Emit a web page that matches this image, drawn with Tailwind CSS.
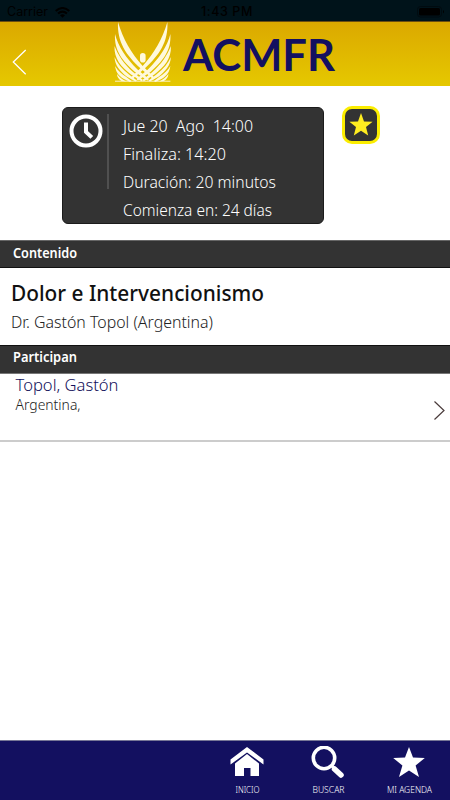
<!DOCTYPE html>
<html lang="es">
<head>
<meta charset="utf-8">
<meta name="viewport" content="width=device-width">
<title>ACMFR</title>
<script src="https://cdn.jsdelivr.net/npm/@tailwindcss/browser@4"></script>
</head>
<body class="flex h-[800px] w-[450px] flex-col overflow-hidden bg-white font-['Noto_Sans',sans-serif] text-[#111]">
<div class="grid h-[21px] shrink-0 grid-cols-3 items-center bg-[#00131a] pt-[3px] font-['Inter',sans-serif] text-[12.5px] leading-none text-black">
  <div class="flex items-center gap-[7px] pl-[7px]"><span>Carrier</span>
    <svg class="h-[11px] w-[15px]" viewBox="0 0 15 11" fill="none" stroke="#000" stroke-width="2"><path d="M.7 4Q7.5-2 14.3 4M3 6.6Q7.5 2.6 12 6.6"/><path d="M5 8.3Q7.5 6.4 10 8.3L7.5 10.8Z" fill="#000" stroke="none"/></svg>
  </div>
  <span class="pl-[4px] text-center font-medium tracking-[.6px]">1:43 PM</span>
  <div class="flex justify-end pr-[5px]"><svg class="h-[12px] w-[28px]" viewBox="0 0 28 12"><rect x=".5" y=".5" width="24" height="10.5" rx="3" fill="none" stroke="#000b10"/><rect x="2" y="2" width="21" height="7.5" rx="1.5"/><path d="M26 4q2 1.7 0 3.4z"/></svg></div>
</div>
<header class="flex h-[65px] shrink-0 border-t border-[#6b4d10] bg-linear-to-b from-[#dba800] to-[#e5c800]">
  <svg class="mt-[27px] ml-[12px] h-[26px] w-[15px]" viewBox="0 0 15 26" fill="none" stroke="#fff" stroke-width="1.3"><path d="M13.7 1L1.3 13L13.7 25.3"/></svg>
  <svg class="ml-[86px] h-[62px] w-[60px]" viewBox="0 0 60 62" fill="#fff9dc">
    <g>
      <path d="M5 0C10 17 18 31 29.7 44L42 56L40.5 57.5L27.7 46.5C13 33 4 20 5 0Z"/>
      <path d="M2 12C5 24 13 36 24.5 47.5L36 57L34.5 58.5L22 50C10 39.5 1 29 2 12Z"/>
      <path d="M1.5 24C5 33 11 42 20 50L30 58L28.5 59.2L18 52.5C8 44.5 1 37 1.5 24Z"/>
      <path d="M1.5 35C4 41 9 47 16 52.5L24 58.5L22.5 59.5L14 54.8C7 49 2 44 1.5 35Z"/>
      <path d="M2 44C5 49 9 52 13 54.8L18.5 59L17 60L10.5 56.8C5 53 3 50 2 44Z"/>
      <path d="M4 52C6 55 9 57 13 59.5L8.5 59C6 57.5 4 55 4 52Z"/>
    </g>
    <g transform="translate(59.4 0) scale(-1 1)">
      <path d="M5 0C10 17 18 31 29.7 44L42 56L40.5 57.5L27.7 46.5C13 33 4 20 5 0Z"/>
      <path d="M2 12C5 24 13 36 24.5 47.5L36 57L34.5 58.5L22 50C10 39.5 1 29 2 12Z"/>
      <path d="M1.5 24C5 33 11 42 20 50L30 58L28.5 59.2L18 52.5C8 44.5 1 37 1.5 24Z"/>
      <path d="M1.5 35C4 41 9 47 16 52.5L24 58.5L22.5 59.5L14 54.8C7 49 2 44 1.5 35Z"/>
      <path d="M2 44C5 49 9 52 13 54.8L18.5 59L17 60L10.5 56.8C5 53 3 50 2 44Z"/>
      <path d="M4 52C6 55 9 57 13 59.5L8.5 59C6 57.5 4 55 4 52Z"/>
    </g>
    <rect x="27" y="31" width="5.6" height="9.5" rx="2.8"/>
    <path d="M2 59.2H57.4" fill="none" stroke="#fff9dc" stroke-width=".9"/>
  </svg>
  <svg class="ml-[9px] h-[62px] w-[160px]" viewBox="0 0 160 62"><text x="1" y="49" textLength="152" lengthAdjust="spacingAndGlyphs" class="fill-[#131060] font-['Lato',sans-serif] text-[44.5px] font-bold">ACMFR</text></svg>
</header>
<section class="flex h-[154px] shrink-0 items-start pt-[20px] pl-[62px]">
  <div class="mt-px flex h-[117px] w-[262px] rounded-[6px] border border-[#1b1b1b] bg-[#333]">
    <svg class="mt-[6px] ml-[6px] h-[34px] w-[34px] shrink-0" viewBox="0 0 34 34" fill="none" stroke="#fff"><circle cx="17" cy="17" r="14.5" stroke-width="4"/><path d="M17 8.5V18L22.8 23.4" stroke-width="4"/></svg>
    <div class="mt-[6px] ml-[4px] h-[75px] w-[1.5px] shrink-0 bg-[#505050]"></div>
    <svg class="mt-[4px] ml-[14px] block h-[112px] w-[190px] overflow-visible text-[16.5px] font-light" viewBox="0 0 190 112" fill="#fff"><text y="20" x="0" textLength="130" lengthAdjust="spacingAndGlyphs" xml:space="preserve">Jue 20  Ago  14:00</text><text y="48" x="0" textLength="103" lengthAdjust="spacingAndGlyphs">Finaliza: 14:20</text><text y="76" x="0" textLength="153" lengthAdjust="spacingAndGlyphs">Duración: 20 minutos</text><text y="104" x="0" textLength="149" lengthAdjust="spacingAndGlyphs">Comienza en: 24 días</text></svg>
  </div>
  <div class="ml-[18px] flex h-[38px] w-[38px] items-center justify-center rounded-[10px] border-[3px] border-[#fbed00] bg-[#333]">
    <svg class="h-[24px] w-[24px]" viewBox="0 0 24 24" fill="#ffed20"><path d="M12 0L15 8.5L23.6 8.8L17 14L19.2 22.5L12 17.7L4.8 22.5L7 14L.4 8.8L9 8.5Z"/></svg>
  </div>
</section>
<h2 class="flex h-[28px] shrink-0 items-center border-t border-b border-t-[#666] border-b-[#111] bg-[#333] pl-[13px]">
  <svg class="h-[26px] w-[70px] overflow-visible" viewBox="0 0 70 26" fill="#fff"><text y="17" textLength="64" lengthAdjust="spacingAndGlyphs" class="text-[14px] font-semibold">Contenido</text></svg>
</h2>
<section class="flex h-[77px] shrink-0 flex-col pl-[11px]">
  <svg class="h-[39px] w-[270px] overflow-visible" viewBox="0 0 270 39" fill="#111"><text y="33" textLength="253" lengthAdjust="spacingAndGlyphs" class="text-[22.5px] font-medium">Dolor e Intervencionismo</text></svg>
  <svg class="h-[37px] w-[220px] overflow-visible" viewBox="0 0 220 37" fill="#222"><text y="21" textLength="202" lengthAdjust="spacingAndGlyphs" class="text-[16px] font-light">Dr. Gastón Topol (Argentina)</text></svg>
</section>
<h2 class="flex h-[29px] shrink-0 items-center border-t border-b border-t-[#111] border-b-[#777] bg-[#333] pl-[13px]">
  <svg class="h-[27px] w-[70px] overflow-visible" viewBox="0 0 70 27" fill="#fff"><text y="16" textLength="64" lengthAdjust="spacingAndGlyphs" class="text-[14px] font-semibold">Participan</text></svg>
</h2>
<section class="flex h-[68px] shrink-0 justify-between border-b-2 border-[#ccc] pr-[5px] pl-[15px]">
  <svg class="h-[60px] w-[120px] overflow-visible" viewBox="0 0 120 60"><text x=".5" y="16.5" textLength="103" lengthAdjust="spacingAndGlyphs" class="fill-[#12105a] text-[17px] font-light">Topol, Gastón</text><text x=".5" y="36" textLength="65" lengthAdjust="spacingAndGlyphs" class="fill-[#222] text-[14px] font-light">Argentina,</text></svg>
  <svg class="mt-[26px] h-[21px] w-[12px]" viewBox="0 0 12 21" fill="none" stroke="#4a3b3b" stroke-width="1.2"><path d="M1.5 1.5L11 10.5L1.5 19.5"/></svg>
</section>
<main class="flex-1"></main>
<nav class="flex h-[60px] shrink-0 justify-end border-t border-[#777796] bg-[#131060] pr-px text-white">
  <div class="flex w-[81px] flex-col items-center pt-[5px]">
    <svg class="h-[32px] w-[34px]" viewBox="0 0 34 32" fill="#fff"><path d="M17 1L33.5 13.5V18.5L17 6.5L.5 18.5V13.5Z"/><path d="M17 8L29 17.5V30H20.5V22H14V30H5V17.5Z"/></svg>
    <svg class="mt-[3px] h-[16px] w-[50px]" viewBox="0 0 50 16" fill="#fff"><text x="13.5" y="12" textLength="24" lengthAdjust="spacingAndGlyphs" class="text-[9.5px] font-light">INICIO</text></svg>
  </div>
  <div class="flex w-[81px] flex-col items-center pt-[5px]">
    <svg class="h-[33px] w-[34px]" viewBox="0 0 34 33" fill="none" stroke="#fff"><circle cx="13" cy="12" r="10.7" stroke-width="3.6"/><path d="M20 19L23 22" stroke-width="3"/><path d="M23.5 23L30 29" stroke-width="5.5" stroke-linecap="round"/></svg>
    <svg class="mt-[2px] h-[16px] w-[50px]" viewBox="0 0 50 16" fill="#fff"><text x="9.5" y="12" textLength="32" lengthAdjust="spacingAndGlyphs" class="text-[9.5px] font-light">BUSCAR</text></svg>
  </div>
  <div class="flex w-[81px] flex-col items-center pt-[5px]">
    <svg class="h-[32px] w-[34px]" viewBox="0 0 34 32" fill="#fff"><path d="M17 1L21 11.5L32.8 12L23.6 19.5L27 31L17 24.6L7 31L10.4 19.5L1.2 12L13 11.5Z"/></svg>
    <svg class="mt-[3px] h-[16px] w-[60px]" viewBox="0 0 60 16" fill="#fff"><text x="8" y="12" textLength="45" lengthAdjust="spacingAndGlyphs" class="text-[9.5px] font-light">MI AGENDA</text></svg>
  </div>
</nav>
</body>
</html>
